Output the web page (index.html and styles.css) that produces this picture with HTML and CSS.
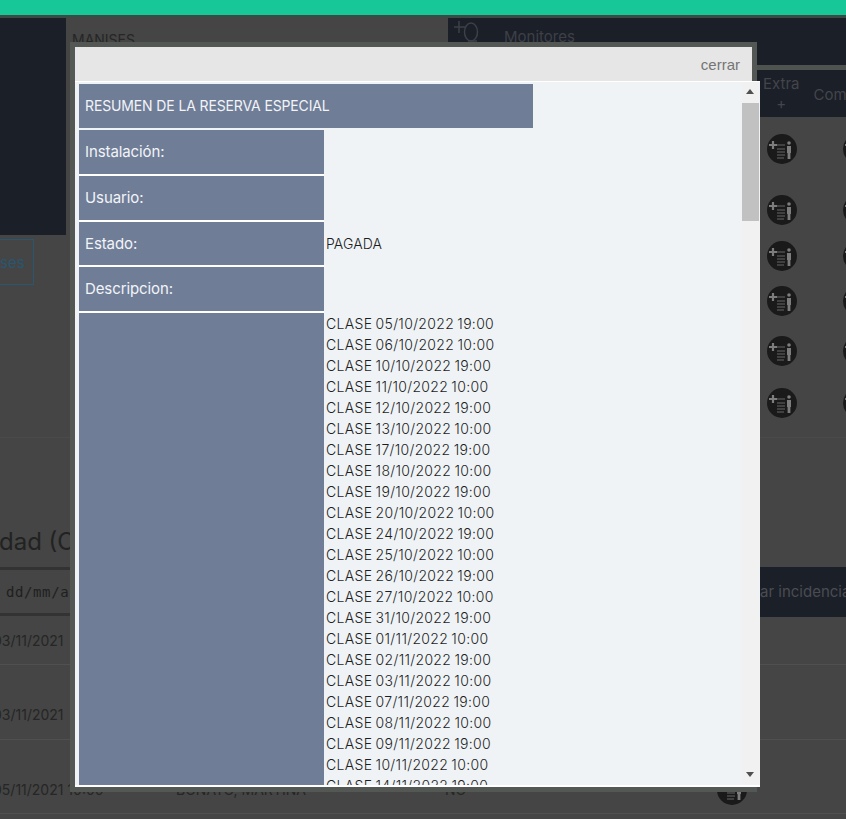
FILE: index.html
```html
<!DOCTYPE html>
<html lang="es">
<head>
	<meta charset="UTF-8" />
	<title>Reservas</title>
	<link rel="stylesheet" href="styles.css">
</head>
<body>
	<svg class="defs" width="0" height="0">
		<symbol id="ico-extra" viewBox="0 0 30 30">
			<circle cx="15" cy="15" r="15" fill="#1a1a1a"/>
			<path d="M2 11h8M6 7v8" stroke="#7d7d7d" stroke-width="2.2" fill="none"/>
			<path d="M10 11h8M10 15h8M10 18h8M10 21h8M10 24h7" stroke="#666" stroke-width="1.2" fill="none"/>
			<circle cx="22" cy="9" r="1.8" fill="#7d7d7d"/>
			<path d="M20 12h4v7h-.6v6h-2.8v-6H20z" fill="#7d7d7d"/>
		</symbol>
	</svg>

	<div class="topbar"></div>

	<div class="upper">
		<div class="left">
			<div class="left-top">
				<div class="panel"></div>
				<div class="place">MANISES</div>
			</div>
			<div class="clases-btn">ses</div>
		</div>
		<div class="right">
			<div class="right-head">
				<svg class="ico-monitor" width="30" height="28" viewBox="0 0 30 28">
					<path d="M1 9h11M6 3v12" stroke="#3e4047" stroke-width="1.5" fill="none"/>
					<ellipse cx="18" cy="14" rx="6.5" ry="9" stroke="#3e4047" stroke-width="1.5" fill="none"/>
					<path d="M15 23h9" stroke="#3e4047" stroke-width="1.5" fill="none"/>
				</svg>
				<span class="monitor-txt">Monitores</span>
			</div>
			<div class="table-head">
				<div class="th-extra">Extra<br>+</div>
				<div class="th-com">Com</div>
			</div>
			<div class="t-row m17"><svg class="ico"><use href="#ico-extra"/></svg><svg class="ico"><use href="#ico-extra"/></svg></div>
			<div class="t-row m31"><svg class="ico"><use href="#ico-extra"/></svg><svg class="ico"><use href="#ico-extra"/></svg></div>
			<div class="t-row m16"><svg class="ico"><use href="#ico-extra"/></svg><svg class="ico"><use href="#ico-extra"/></svg></div>
			<div class="t-row m15"><svg class="ico"><use href="#ico-extra"/></svg><svg class="ico"><use href="#ico-extra"/></svg></div>
			<div class="t-row m20"><svg class="ico"><use href="#ico-extra"/></svg><svg class="ico"><use href="#ico-extra"/></svg></div>
			<div class="t-row m22"><svg class="ico"><use href="#ico-extra"/></svg><svg class="ico"><use href="#ico-extra"/></svg></div>
		</div>
	</div>

	<div class="lower">
		<h2 class="lower-title">dad (C</h2>
		<div class="filter">
			<span class="date-input">dd/mm/a</span>
			<span class="filter-btn">ar incidencia</span>
		</div>
		<div class="inc-row h49"><span class="date">03/11/2021</span></div>
		<div class="inc-row h75"><span class="date">03/11/2021</span></div>
		<div class="inc-row h74">
			<span class="date">05/11/2021 10:00</span>
			<span>BONATO, MARTINA</span>
			<span>NO</span>
			<svg class="ico"><use href="#ico-extra"/></svg>
		</div>
	</div>

	<div class="modal">
		<div class="modal-head">cerrar</div>
		<div class="modal-body">
			<div class="modal-scroll">
				<div class="res-title">RESUMEN DE LA RESERVA ESPECIAL</div>
				<div class="res-row"><div class="res-label">Instalación:</div><div class="res-val"></div></div>
				<div class="res-row"><div class="res-label">Usuario:</div><div class="res-val"></div></div>
				<div class="res-row"><div class="res-label">Estado:</div><div class="res-val">PAGADA</div></div>
				<div class="res-row"><div class="res-label">Descripcion:</div><div class="res-val"></div></div>
				<div class="res-row res-last">
					<div class="res-label"></div>
					<div class="res-list">
						CLASE 05/10/2022 19:00<br>
						CLASE 06/10/2022 10:00<br>
						CLASE 10/10/2022 19:00<br>
						CLASE 11/10/2022 10:00<br>
						CLASE 12/10/2022 19:00<br>
						CLASE 13/10/2022 10:00<br>
						CLASE 17/10/2022 19:00<br>
						CLASE 18/10/2022 10:00<br>
						CLASE 19/10/2022 19:00<br>
						CLASE 20/10/2022 10:00<br>
						CLASE 24/10/2022 19:00<br>
						CLASE 25/10/2022 10:00<br>
						CLASE 26/10/2022 19:00<br>
						CLASE 27/10/2022 10:00<br>
						CLASE 31/10/2022 19:00<br>
						CLASE 01/11/2022 10:00<br>
						CLASE 02/11/2022 19:00<br>
						CLASE 03/11/2022 10:00<br>
						CLASE 07/11/2022 19:00<br>
						CLASE 08/11/2022 10:00<br>
						CLASE 09/11/2022 19:00<br>
						CLASE 10/11/2022 10:00<br>
						CLASE 14/11/2022 19:00<br>
						CLASE 15/11/2022 10:00
					</div>
				</div>
			</div>
			<div class="scrollbar">
				<div class="arrow-up"></div>
				<div class="thumb"></div>
				<div class="arrow-down"></div>
			</div>
		</div>
	</div>
</body>
</html>
```

FILE: styles.css
```css
html, body{
	margin:0;
	height:819px;
	overflow:hidden;
}
body{
	position:relative;
	background:#444544;
	font-family:Inter, "Liberation Sans", sans-serif;
	font-size:14px;
	color:#2a2a2a;
}
.defs{
	position:absolute;
}
.topbar{
	height:15px;
	background:#17c797;
	border-bottom:3px solid #3c4a45;
}

/* pagina de detras */
.upper{
	display:grid;
	grid-template-columns:448px 398px;
	height:419px;
}
.left-top{
	display:flex;
	height:217px;
}
.panel{
	width:66px;
	background:#1b1f27;
}
.place{
	padding:13px 0 0 6px;
	color:#262626;
}
.clases-btn{
	box-sizing:border-box;
	width:34px;
	height:46px;
	margin-top:4px;
	padding-top:13px;
	border:1px solid #2a5670;
	border-left:0;
	color:#2a5670;
	font-size:15px;
}
.right-head{
	display:flex;
	height:47px;
	background:#1b1f27;
	border-bottom:5px solid #4f5350;
}
.ico-monitor{
	margin-left:5px;
}
.monitor-txt{
	margin:9px 0 0 21px;
	color:#3e4047;
	font-size:15px;
}
.table-head{
	display:flex;
	height:47px;
	background:#1b1f27;
	font-size:15px;
	color:#43454c;
}
.th-extra{
	margin-left:315px;
	width:44px;
	padding-top:4px;
	text-align:center;
	line-height:20px;
}
.th-com{
	margin:15px 0 0 14px;
}
.t-row{
	display:flex;
	gap:46px;
	height:30px;
	padding-left:319px;
}
.m17{margin-top:17px;}
.m31{margin-top:31px;}
.m16{margin-top:16px;}
.m15{margin-top:15px;}
.m20{margin-top:20px;}
.m22{margin-top:22px;}
.ico{
	width:30px;
	height:30px;
	flex:none;
}

.lower{
	padding-top:1px;
	border-top:1px solid #4a4a4a;
}
.lower-title{
	margin:88px 0 0;
	height:40px;
	font-size:24px;
	font-weight:400;
	line-height:30px;
	color:#222;
	text-indent:-1px;
}
.filter{
	display:flex;
	justify-content:space-between;
	align-items:center;
	box-sizing:border-box;
	height:49px;
	border-top:3px solid #333;
	border-bottom:3px solid #333;
}
.date-input{
	margin-left:6px;
	font-family:"DejaVu Sans Mono", monospace;
	font-size:14px;
	letter-spacing:.6px;
	color:#1f1f1f;
}
.filter-btn{
	display:block;
	width:86px;
	height:50px;
	font-size:15px;
	line-height:50px;
	background:#1b1f27;
	color:#4a4c53;
	white-space:nowrap;
	overflow:hidden;
}
.inc-row{
	display:grid;
	grid-template-columns:176px 269px 272px 1fr;
	align-items:end;
	box-sizing:border-box;
	border-bottom:1px solid #505050;
	color:#262626;
}
.h49{height:49px;padding-bottom:15px;}
.h75{height:75px;padding-bottom:16px;}
.h74{height:74px;padding-bottom:15px;}
.inc-row .ico{
	margin-bottom:-7px;
}
.date{
	margin-left:-7px;
	white-space:nowrap;
}

/* modal */
.modal{
	position:absolute;
	left:70px;
	top:42px;
	width:677px;
	height:740px;
	border:5px solid #545854;
}
.modal-head{
	box-sizing:border-box;
	height:34px;
	padding:9px 12px 0 0;
	background:#e6e6e6;
	text-align:right;
	font-family:"Liberation Sans", sans-serif;
	font-size:15px;
	color:#757575;
}
.modal-body{
	display:flex;
	width:685px;
	height:706px;
	margin-right:-8px;
	background:#eff3f6;
	border-bottom:2px solid #fff;
	border-top:1px solid #fff;
	box-sizing:border-box;
}
.modal-scroll{
	flex:1;
	box-sizing:border-box;
	padding:2px 0 0 4px;
	overflow:hidden;
}
.res-title{
	box-sizing:border-box;
	width:454px;
	height:44px;
	padding-left:6px;
	margin-bottom:2px;
	line-height:44px;
	background:#6f7d97;
	color:#f2f4f7;
	letter-spacing:-.13px;
}
.res-row{
	display:flex;
	height:45.75px;
}
.res-label{
	box-sizing:border-box;
	width:245px;
	flex:none;
	padding-left:6px;
	line-height:44px;
	background:#6f7d97;
	border-bottom:2px solid #fff;
	font-size:15px;
	letter-spacing:-.1px;
	color:#f2f4f7;
}
.res-val{
	padding-left:2px;
	line-height:44px;
	font-weight:300;
	letter-spacing:.1px;
	color:#1e1e1e;
}
.res-last{
	height:520px;
}
.res-last .res-label{
	border-bottom:0;
}
.res-list{
	padding-left:2px;
	font-weight:300;
	line-height:21px;
	letter-spacing:.32px;
	word-spacing:-1px;
	color:#1e1e1e;
}
.scrollbar{
	position:relative;
	width:17px;
	margin-right:1px;
	flex:none;
	background:#f1f1f1;
}
.thumb{
	position:absolute;
	top:21px;
	left:0;
	width:17px;
	height:118px;
	background:#c1c1c1;
}
.arrow-up,.arrow-down{
	position:absolute;
	left:4px;
	width:0;
	height:0;
	border-left:4.5px solid transparent;
	border-right:4.5px solid transparent;
}
.arrow-up{
	top:7px;
	border-bottom:5px solid #505050;
}
.arrow-down{
	bottom:8px;
	border-top:5px solid #505050;
}
```
